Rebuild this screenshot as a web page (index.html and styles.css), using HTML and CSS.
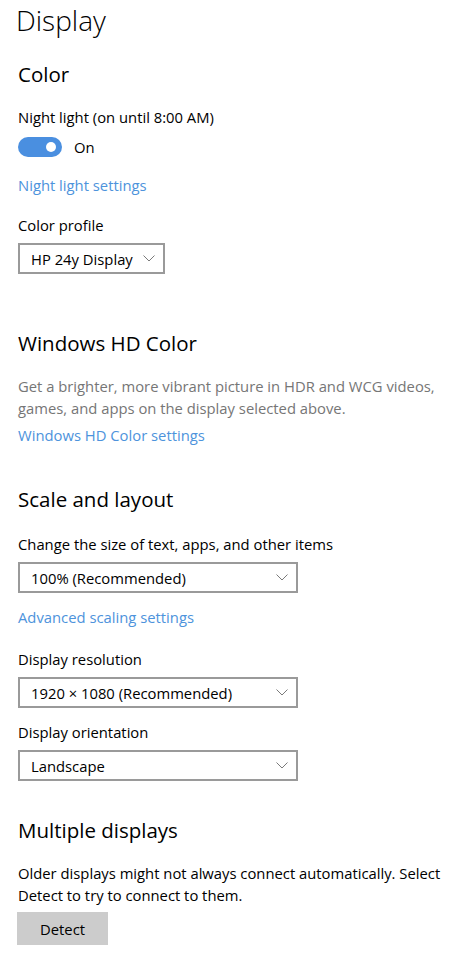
FILE: index.html
```html
<!DOCTYPE html>
<html lang="en">
<head>
  <meta charset="UTF-8">
  <meta name="viewport" content="width=device-width, initial-scale=1">
  <title>Display</title>
  <link rel="stylesheet" href="styles.css">
</head>
<body>
  <div class="page">
    <h1 class="page-title">Display</h1>

    <section class="group">
      <h2>Color</h2>
      <p class="label first">Night light (on until 8:00 AM)</p>
      <div class="toggle-row">
        <span class="toggle"><span class="knob"></span></span>
        <span>On</span>
      </div>
      <a class="link night-link" href="#">Night light settings</a>
      <p class="label">Color profile</p>
      <div class="select short">
        <span>HP 24y Display</span>
        <svg class="chev" width="12" height="7" viewBox="0 0 12 7"><path d="M0.5 0.5 L6 6 L11.5 0.5" fill="none" stroke="#7a7a7a" stroke-width="1"/></svg>
      </div>
    </section>

    <section class="group hd">
      <h2>Windows HD Color</h2>
      <p class="desc">Get a brighter, more vibrant picture in HDR and WCG videos, games, and apps on the display selected above.</p>
      <a class="link" href="#">Windows HD Color settings</a>
    </section>

    <section class="group scale">
      <h2>Scale and layout</h2>
      <p class="label first">Change the size of text, apps, and other items</p>
      <div class="select wide">
        <span>100% (Recommended)</span>
        <svg class="chev" width="12" height="7" viewBox="0 0 12 7"><path d="M0.5 0.5 L6 6 L11.5 0.5" fill="none" stroke="#7a7a7a" stroke-width="1"/></svg>
      </div>
      <a class="link scale-link" href="#">Advanced scaling settings</a>
      <p class="label spaced">Display resolution</p>
      <div class="select wide">
        <span>1920 × 1080 (Recommended)</span>
        <svg class="chev" width="12" height="7" viewBox="0 0 12 7"><path d="M0.5 0.5 L6 6 L11.5 0.5" fill="none" stroke="#7a7a7a" stroke-width="1"/></svg>
      </div>
      <p class="label">Display orientation</p>
      <div class="select wide">
        <span>Landscape</span>
        <svg class="chev" width="12" height="7" viewBox="0 0 12 7"><path d="M0.5 0.5 L6 6 L11.5 0.5" fill="none" stroke="#7a7a7a" stroke-width="1"/></svg>
      </div>
    </section>

    <section class="group multi">
      <h2>Multiple displays</h2>
      <p class="text first">Older displays might not always connect automatically. Select Detect to try to connect to them.</p>
      <button class="btn">Detect</button>
    </section>
  </div>
</body>
</html>
```

FILE: styles.css
```css
body {
  margin: 0;
  background: #fff;
  color: #000;
  font-family: "Open Sans", "Noto Sans", sans-serif;
  font-size: 14.8px;
}

.page {
  padding: 0 0 0 18px;
  width: 440px;
}

.page-title {
  margin: 0 0 0 -2px;
  font-size: 28px;
  font-weight: 300;
  line-height: 40px;
}

h2 {
  margin: 0;
  font-size: 20.5px;
  font-weight: 400;
  line-height: 28px;
}

.group {
  margin-top: 20px;
}

.group.hd {
  margin-top: 55px;
}

.group.scale {
  margin-top: 39px;
}

.group.multi {
  margin-top: 35px;
}

.label,
.text {
  margin: 18px 0 0;
  line-height: 22px;
}

.scale .label {
  margin-top: 13px;
}

.scale .label.first {
  margin-top: 20px;
}

.scale .label.spaced {
  margin-top: 20px;
}

.toggle-row {
  display: flex;
  align-items: center;
  gap: 12px;
  margin-top: 8px;
  height: 22px;
}

.toggle {
  display: flex;
  align-items: center;
  justify-content: flex-end;
  width: 44px;
  height: 20px;
  padding: 0 6px;
  box-sizing: border-box;
  border-radius: 10px;
  background: #4a8fe0;
}

.knob {
  width: 10px;
  height: 10px;
  border-radius: 50%;
  background: #fff;
}

.link {
  display: block;
  color: #4d93dc;
  text-decoration: none;
  line-height: 22px;
}

.night-link {
  margin-top: 16px;
}

.scale-link {
  margin-top: 13px;
}

.desc {
  margin: 18px 0 0;
  color: #767676;
  line-height: 22px;
}

.hd .link {
  margin-top: 5px;
}

.select {
  display: flex;
  align-items: center;
  justify-content: space-between;
  box-sizing: border-box;
  height: 31px;
  margin-top: 7px;
  padding: 0 8px 0 11px;
  border: 2px solid #9a9a9a;
}

.select.short {
  width: 147px;
}

.select.wide {
  width: 280px;
}

.btn {
  display: block;
  margin: 6px 0 0 -1px;
  width: 91px;
  height: 33px;
  border: none;
  background: #cccccc;
  color: #000;
  font-family: inherit;
  font-size: 14.8px;
}
```
